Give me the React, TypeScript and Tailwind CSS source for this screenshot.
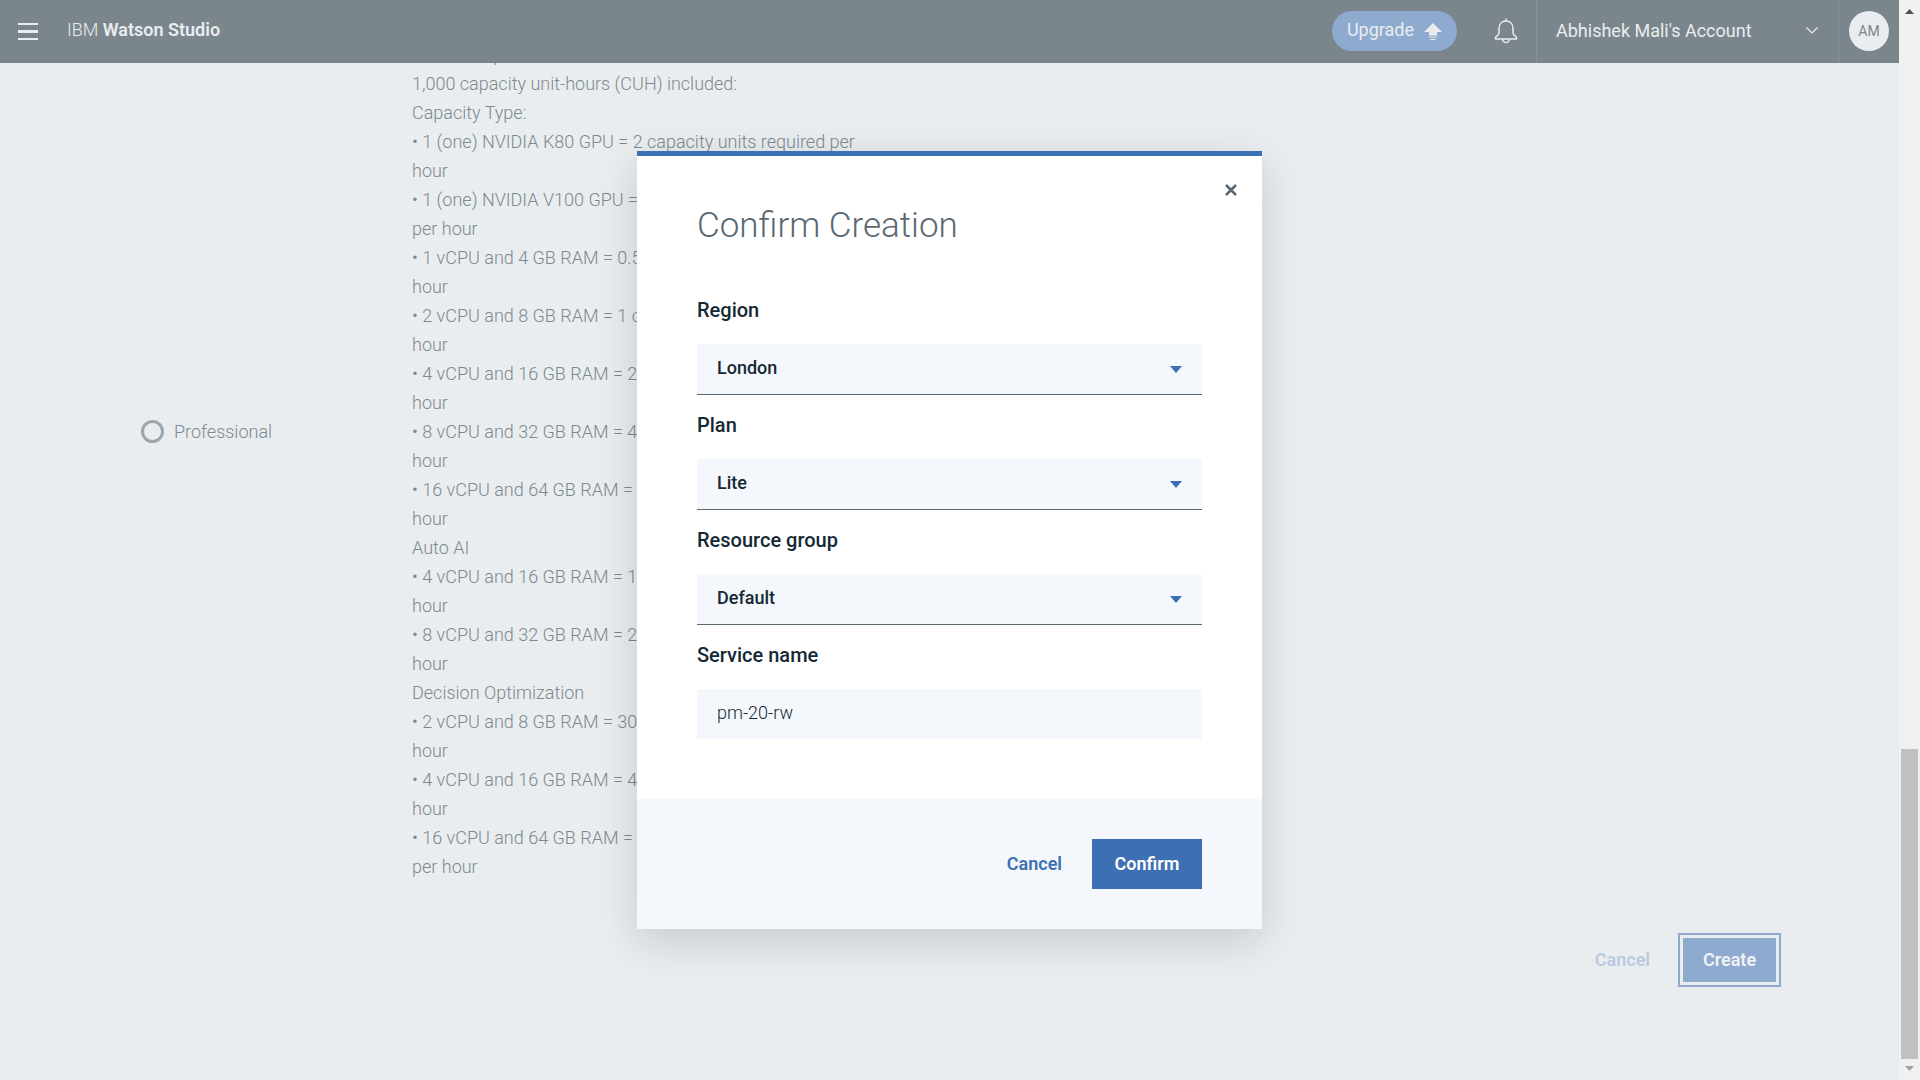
import { useState } from "react";

const planLines = [
  "1,000,000 predictions",
  "1,000 capacity unit-hours (CUH) included:",
  "Capacity Type:",
  "• 1 (one) NVIDIA K80 GPU = 2 capacity units required per",
  "hour",
  "• 1 (one) NVIDIA V100 GPU = 3 capacity units required",
  "per hour",
  "• 1 vCPU and 4 GB RAM = 0.5 capacity units required per",
  "hour",
  "• 2 vCPU and 8 GB RAM = 1 capacity units required per",
  "hour",
  "• 4 vCPU and 16 GB RAM = 2 capacity units required per",
  "hour",
  "• 8 vCPU and 32 GB RAM = 4 capacity units required per",
  "hour",
  "• 16 vCPU and 64 GB RAM = 8 capacity units required per",
  "hour",
  "Auto AI",
  "• 4 vCPU and 16 GB RAM = 10 capacity units required per",
  "hour",
  "• 8 vCPU and 32 GB RAM = 20 capacity units required per",
  "hour",
  "Decision Optimization",
  "• 2 vCPU and 8 GB RAM = 30 capacity units required per",
  "hour",
  "• 4 vCPU and 16 GB RAM = 40 capacity units required per",
  "hour",
  "• 16 vCPU and 64 GB RAM = 60 capacity units required",
  "per hour",
];

function BellIcon() {
  return (
    <svg viewBox="0 0 24 26" className="h-[26px] w-6" fill="none" stroke="currentColor" strokeWidth="1.5" aria-hidden="true">
      <path d="M12 .5v2.500" />
      <path d="M12 3c-4.300 0-7 3.200-7 7.500v4.500c0 1.500-1.500 2.700-3.500 4.400v1.600h21v-1.600c-2-1.700-3.500-2.900-3.500-4.400V10.500C19 6.200 16.300 3 12 3Z" strokeLinejoin="round" />
      <path d="M8.500 21c.3 2.200 1.600 3.500 3.500 3.500s3.200-1.300 3.500-3.500" />
    </svg>
  );
}

function UpgradeIcon() {
  return (
    <svg viewBox="0 0 18 17" className="h-[17px] w-[18px]" fill="currentColor" aria-hidden="true">
      <path d="M9 0 18 9h-5v3.500H5V9H0Z" />
      <path d="M5 13.500h8V15H5z" opacity="0.6" />
      <path d="M6.500 16h5v1h-5z" />
    </svg>
  );
}

function Header() {
  return (
    <header className="flex h-[63px] shrink-0 items-stretch bg-[#7a868c] text-lg text-[#eaedef]">
      <button type="button" aria-label="Menu" className="flex flex-col justify-center gap-[5px] pl-[18px]">
        <span className="h-0.5 w-5 bg-current" />
        <span className="h-[3px] w-5 bg-current" />
        <span className="h-0.5 w-5 bg-current" />
      </button>
      <a href="#home" className="ml-[29px] flex items-center pb-1">
        <span className="font-light">IBM&nbsp;</span>
        <span className="font-semibold">Watson Studio</span>
      </a>
      <div className="ml-auto flex items-center pb-px">
        <button type="button" className="flex h-10 w-[125px] items-center justify-center gap-2.5 rounded-full bg-[#8faacf]">
          <span className="pb-0.5">Upgrade</span>
          <UpgradeIcon />
        </button>
        <button type="button" aria-label="Notifications" className="ml-[37px] mr-[18px]">
          <BellIcon />
        </button>
      </div>
      <button type="button" className="flex w-[303px] items-center justify-between border-x border-[#87939a] pb-0.5 pl-[19px] pr-5">
        <span>Abhishek Mali's Account</span>
        <svg viewBox="0 0 12 7" className="h-[7px] w-3" fill="none" stroke="currentColor" strokeWidth="1.2" aria-hidden="true">
          <path d="m.5.500 5.500 5.500L11.500.500" />
        </svg>
      </button>
      <div className="flex items-center px-[10px] pb-px">
        <button type="button" aria-label="Profile" className="size-10 rounded-full bg-[#e9edef] text-sm text-[#7a868c]">
          AM
        </button>
      </div>
    </header>
  );
}

function PlanPage() {
  return (
    <main className="flex min-h-0 grow flex-col justify-end overflow-hidden pb-[98px] pl-[141px] pr-[121px] text-lg text-[#7c8990]">
      <div className="flex shrink-0 items-center font-light">
        <label className="flex w-[271px] shrink-0 items-center gap-[10px]">
          <input type="radio" name="plan" className="size-[23px] appearance-none rounded-full border-[3px] border-[#9ca6ac]" />
          <span>Professional</span>
        </label>
        <ul className="pt-[58px] leading-[29px]">
          {planLines.map((line, i) => (
            <li key={i} className="whitespace-nowrap">{line}</li>
          ))}
        </ul>
      </div>
      <div className="mt-[57px] flex shrink-0 items-center justify-end gap-[33px] pr-0.5 font-semibold">
        <button type="button" className="text-[#bbcae0]">Cancel</button>
        <button type="button" className="h-[44px] w-[93px] bg-[#8faacf] text-[#f0f2f4] outline-2 outline-offset-3 outline-[#8faacf]">
          Create
        </button>
      </div>
    </main>
  );
}

function SelectField({ id, label, value }: { id: string; label: string; value: string }) {
  return (
    <div>
      <label htmlFor={id} className="block text-xl leading-6 font-medium text-[#152935]">{label}</label>
      <div className="relative mt-[22px]">
        <select
          id={id}
          defaultValue={value}
          className="block h-[51px] w-full appearance-none border-b border-[#5a6872] bg-[#f4f7fb] px-5 pb-0.5 text-lg font-medium text-[#152935]"
        >
          <option>{value}</option>
        </select>
        <svg viewBox="0 0 12 7" className="pointer-events-none absolute top-[22px] right-5 h-[7px] w-3 fill-[#3d70b2]" aria-hidden="true">
          <path d="M0 0h12L6 7Z" />
        </svg>
      </div>
    </div>
  );
}

function ConfirmDialog() {
  const [name, setName] = useState("pm-20-rw");
  return (
    <section
      role="dialog"
      aria-labelledby="dialog-title"
      className="w-full max-w-[625px] border-t-[5px] border-[#3d70b2] bg-white shadow-[0_12px_40px_0_rgba(0,0,0,0.15)]"
    >
      <div className="flex justify-end pt-7 pr-[25px]">
        <button type="button" aria-label="Close" className="text-[#5a6872]">
          <svg viewBox="0 0 12 12" className="size-3" fill="none" stroke="currentColor" strokeWidth="2.500" aria-hidden="true">
            <path d="m1 1 10 10M11 1 1 11" />
          </svg>
        </button>
      </div>
      <h2 id="dialog-title" className="px-[60px] pt-2 text-[35px] leading-[44px] font-light text-[#5a6872]">Confirm Creation</h2>
      <form className="flex flex-col gap-[18px] px-[60px] pt-[50px] pb-[60px]">
        <SelectField id="region" label="Region" value="London" />
        <SelectField id="plan" label="Plan" value="Lite" />
        <SelectField id="group" label="Resource group" value="Default" />
        <div>
          <label htmlFor="service" className="block text-xl leading-6 font-medium text-[#152935]">Service name</label>
          <input
            id="service"
            type="text"
            value={name}
            onChange={(e) => setName(e.target.value)}
            className="mt-[22px] block h-[50px] w-full bg-[#f4f7fb] px-5 pb-1 text-lg font-light text-[#152935]"
          />
        </div>
      </form>
      <footer className="flex items-center justify-end gap-[30px] bg-[#f4f7fb] px-[60px] py-10 text-lg font-semibold">
        <button type="button" className="text-[#3d70b2]">Cancel</button>
        <button type="button" className="h-[50px] w-[110px] bg-[#3d70b2] text-white">Confirm</button>
      </footer>
    </section>
  );
}

function ScrollRail() {
  return (
    <div className="flex w-[21px] shrink-0 flex-col items-center bg-[#f1f1f1] pt-[9px] pb-[9px]" aria-hidden="true">
      <svg viewBox="0 0 9 5" className="h-[5px] w-[9px] shrink-0 fill-[#505050]"><path d="M0 5h9L4.500 0Z" /></svg>
      <div className="mt-[735px] mb-[7px] w-[17px] grow bg-[#c1c1c1]" />
      <svg viewBox="0 0 9 5" className="h-[5px] w-[9px] shrink-0 fill-[#a3a3a3]"><path d="M0 0h9L4.500 5Z" /></svg>
    </div>
  );
}

export default function App() {
  return (
    <div className="flex h-screen overflow-hidden bg-[#e9edef] font-['Roboto',sans-serif]">
      <div className="relative flex min-w-0 grow flex-col">
        <Header />
        <PlanPage />
        <div className="absolute inset-0 flex items-center justify-center">
          <ConfirmDialog />
        </div>
      </div>
      <ScrollRail />
    </div>
  );
}
